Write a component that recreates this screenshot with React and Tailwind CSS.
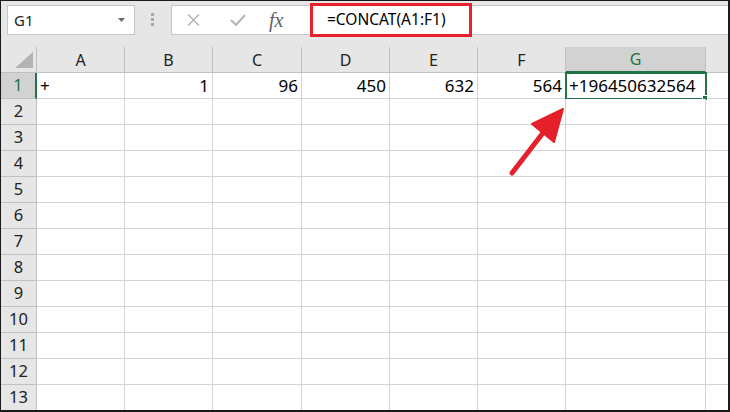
import React from 'react'

const cols = [
  { key: 'A', w: 'w-[88px]' },
  { key: 'B', w: 'w-[88px]' },
  { key: 'C', w: 'w-[89px]' },
  { key: 'D', w: 'w-[88px]' },
  { key: 'E', w: 'w-[88px]' },
  { key: 'F', w: 'w-[88px]' },
  { key: 'G', w: 'w-[140px]' },
]

const row1 = { A: '+', B: '1', C: '96', D: '450', E: '632', F: '564' }

function FormulaBar() {
  return (
    <div className="flex h-[46px] shrink-0 items-start bg-[#e6e6e6] pt-[4px]">
      <div className="ml-[6px] flex h-[30px] w-[128px] items-center justify-between border border-[#c6c6c6] bg-white pl-[6px] pr-[9px]">
        <span className="text-[15px] text-[#222]">G1</span>
        <svg width="7" height="4" viewBox="0 0 7 4">
          <path d="M0 0 L7 0 L3.5 4 Z" fill="#6b6b6b" />
        </svg>
      </div>
      <div className="ml-[16px] mt-[8px] flex flex-col gap-[2px]">
        <span className="h-[3px] w-[3px] bg-[#a8a8a8]" />
        <span className="h-[3px] w-[3px] bg-[#a8a8a8]" />
        <span className="h-[3px] w-[3px] bg-[#a8a8a8]" />
      </div>
      <div className="relative ml-[17px] flex h-[30px] flex-1 items-center border-y border-l border-[#c6c6c6] bg-white">
        <svg className="ml-[15px]" width="13" height="12" viewBox="0 0 13 12">
          <path d="M1 0.5 L12 11.5 M12 0.5 L1 11.5" stroke="#b4b4b4" strokeWidth="1.5" />
        </svg>
        <svg className="ml-[30px]" width="16" height="12" viewBox="0 0 16 12">
          <path d="M1 6 L6 11 L15 1" fill="none" stroke="#b4b4b4" strokeWidth="2" />
        </svg>
        <span className="ml-[23px] italic text-[20px] leading-none text-[#606060] [font-family:'Liberation_Serif',serif]">
          fx
        </span>
        <div className="absolute left-[138px] top-[-3px] flex h-[34px] w-[162px] items-center border-[3px] border-[#e8212a] pl-[14px]">
          <span className="text-[15.5px] text-black">=CONCAT(A1:F1)</span>
        </div>
      </div>
    </div>
  )
}

function HeaderRow() {
  return (
    <div className="flex h-[26px] shrink-0 bg-[#e6e6e6]">
      <div className="relative w-[36px] shrink-0 border-b border-r border-[#c0c0c0]">
        <svg className="absolute bottom-[4px] right-[3px]" width="18" height="16" viewBox="0 0 18 16">
          <path d="M18 0 L18 16 L0 16 Z" fill="#b4b4b4" />
        </svg>
      </div>
      {cols.map((c) => (
        <div
          key={c.key}
          className={`${c.w} flex shrink-0 items-center justify-center border-r text-[16px] ${
            c.key === 'G'
              ? 'border-[#c0c0c0] border-b-2 border-b-[#217346] bg-[#d2d2d2] text-[#217346]'
              : 'border-b border-[#c0c0c0] text-[#222]'
          }`}
        >
          {c.key}
        </div>
      ))}
      <div className="flex-1 border-b border-[#c0c0c0]" />
    </div>
  )
}

function Row({ n }) {
  const first = n === 1
  return (
    <div className="flex h-[26px] shrink-0">
      <div
        className={`flex w-[36px] shrink-0 items-center justify-center border-b text-[16.5px] ${
          first
            ? 'border-[#c0c0c0] border-r-2 border-r-[#217346] bg-[#d2d2d2] text-[#217346]'
            : 'border-r border-[#c0c0c0] bg-[#e6e6e6] text-[#222]'
        }`}
      >
        {n}
      </div>
      {cols.map((c) => (
        <div
          key={c.key}
          className={`${c.w} relative flex shrink-0 items-center border-b border-r border-[#d4d4d4] bg-white px-[3px] text-[17px] text-black ${
            c.key === 'A' || c.key === 'G' ? 'justify-start' : 'justify-end'
          }`}
        >
          {first && c.key !== 'G' && <span>{row1[c.key]}</span>}
          {first && c.key === 'G' && (
            <>
              <span>+196450632564</span>
              <div className="absolute left-[-1px] top-[-1px] h-[28px] w-[142px] border-2 border-[#217346]" />
              <div className="absolute bottom-[-3px] right-[-3px] h-[6px] w-[6px] border border-white bg-[#217346]" />
            </>
          )}
        </div>
      ))}
      <div className="flex-1 border-b border-[#d4d4d4] bg-white" />
    </div>
  )
}

export default function App() {
  return (
    <div className="relative box-border flex h-[412px] w-[730px] flex-col overflow-hidden border-b-2 border-l border-r-2 border-t border-[#1a1a1a] bg-white [font-family:'Noto_Sans',sans-serif]">
      <FormulaBar />
      <HeaderRow />
      {Array.from({ length: 13 }, (_, i) => (
        <Row key={i} n={i + 1} />
      ))}
      <svg className="pointer-events-none absolute left-0 top-0" width="730" height="412" viewBox="0 0 730 412">
        <path d="M511 172 L545 128" stroke="#e4202b" strokeWidth="5" strokeLinecap="round" />
        <path d="M562 108 L531 123 L553 141 Z" fill="#e4202b" stroke="#e4202b" strokeWidth="2" strokeLinejoin="round" />
      </svg>
    </div>
  )
}
